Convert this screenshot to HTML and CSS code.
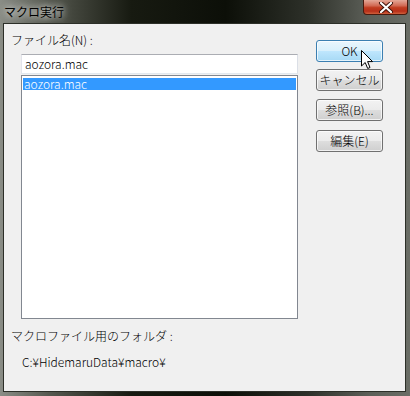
FILE: index.html
```html
<!DOCTYPE html>
<html lang="ja">
<head>
  <meta charset="UTF-8" />
  <title>マクロ実行</title>
  <link rel="stylesheet" href="styles.css">
</head>
<body>
  <div class="window">
    <div class="titlebar">
      <span class="title">マクロ実行</span>
      <div class="close-btn">
        <svg width="16" height="11" viewBox="0 0 16 11">
          <path d="M3 1 L13 10 M13 1 L3 10" stroke="#3a1008" stroke-width="4" stroke-linecap="round"/>
          <path d="M3 1 L13 10 M13 1 L3 10" stroke="#ffffff" stroke-width="2.2" stroke-linecap="round"/>
        </svg>
      </div>
    </div>
    <div class="client">
      <div class="left-col">
        <div class="label">ファイル名(N) :</div>
        <div class="textbox">aozora.mac</div>
        <div class="listbox">
          <div class="item selected">aozora.mac</div>
        </div>
        <div class="label folder-label">マクロファイル用のフォルダ :</div>
        <div class="path">C:¥HidemaruData¥macro¥</div>
      </div>
      <div class="right-col">
        <div class="btn default">OK</div>
        <div class="btn">キャンセル</div>
        <div class="btn">参照(B)...</div>
        <div class="btn">編集(E)</div>
      </div>
    </div>
    <svg class="cursor" width="13" height="20" viewBox="0 0 13 20">
      <path d="M0.5 0.5 L0.5 16 L4.2 12.5 L6.7 18.5 L9 17.5 L6.6 11.6 L11.6 11.6 Z" fill="#ffffff" stroke="#000000" stroke-width="1"/>
    </svg>
  </div>
</body>
</html>
```

FILE: styles.css
```css
body {
  margin: 0;
  font-family: "Noto Sans CJK JP", "Noto Sans", sans-serif;
  font-weight: 300;
  font-size: 12px;
  color: #000;
}
.window {
  position: relative;
  width: 410px;
  height: 396px;
  box-sizing: border-box;
  padding: 0 4px 4px 3px;
  display: flex;
  flex-direction: column;
  background: linear-gradient(90deg, #8a8d86 0%, #55584f 12%, #171a11 32%, #0c0f08 55%, #2d3029 75%, #5c5f58 90%, #6a6d66 100%);
}
.titlebar {
  height: 23px;
  display: flex;
  justify-content: space-between;
  align-items: flex-start;
}
.title {
  margin-top: 3px;
  margin-left: 1px;
  font-size: 12px;
  font-weight: 400;
  color: #000;
  text-shadow: 0 0 6px rgba(255,255,255,0.9), 0 0 10px rgba(255,255,255,0.7);
}
.close-btn {
  width: 45px;
  height: 15px;
  margin-right: -2px;
  box-sizing: border-box;
  border: 1px solid #4a1a0e;
  border-top: none;
  border-radius: 0 0 4px 4px;
  background: linear-gradient(180deg, #e4a898 0%, #d26b55 40%, #c03c20 55%, #b8301a 80%, #d0603c 100%);
  display: flex;
  align-items: center;
  justify-content: center;
}
.client {
  flex: 1;
  display: flex;
  background: #f0f0f0;
  border: 1px solid #2c2f28;
  padding: 9px 0 0 7px;
}
.left-col {
  width: 287px;
}
.label {
  height: 14px;
  line-height: 14px;
}
.textbox {
  margin: 7px 0 0 10px;
  width: 277px;
  height: 20px;
  box-sizing: border-box;
  border: 1px solid #abadb3;
  border-right-color: #dbdfe6;
  border-bottom-color: #e3e9ef;
  border-left-color: #e2e3ea;
  background: #fff;
  padding-left: 3px;
  line-height: 18px;
}
.listbox {
  margin: 1px 0 0 10px;
  width: 277px;
  height: 244px;
  box-sizing: border-box;
  border: 1px solid #828790;
  background: #fff;
  padding: 2px 1px;
}
.item {
  height: 12px;
  line-height: 12px;
  padding-left: 1px;
}
.item.selected {
  background: #3399ff;
  color: #fff;
}
.folder-label {
  margin-top: 10px;
}
.path {
  margin: 12px 0 0 11px;
  line-height: 14px;
}
.right-col {
  margin-left: 18px;
  padding-top: 7px;
  display: flex;
  flex-direction: column;
  gap: 7px;
}
.btn {
  width: 67px;
  height: 22px;
  box-sizing: border-box;
  border: 1px solid #707070;
  border-radius: 3px;
  background: linear-gradient(180deg, #f2f2f2 0%, #ebebeb 48%, #dddddd 52%, #cfcfcf 100%);
  box-shadow: inset 0 0 0 1px rgba(255,255,255,0.7);
  text-align: center;
  line-height: 20px;
}
.btn:nth-child(3) {
  margin-top: 1px;
}
.btn:nth-child(4) {
  margin-top: 2px;
}
.btn.default {
  border-color: #3c7fb1;
  background: linear-gradient(180deg, #eaf6fd 0%, #d9f0fc 48%, #bee6fd 52%, #a7d9f5 100%);
}
.cursor {
  position: absolute;
  left: 361px;
  top: 50px;
}
```
